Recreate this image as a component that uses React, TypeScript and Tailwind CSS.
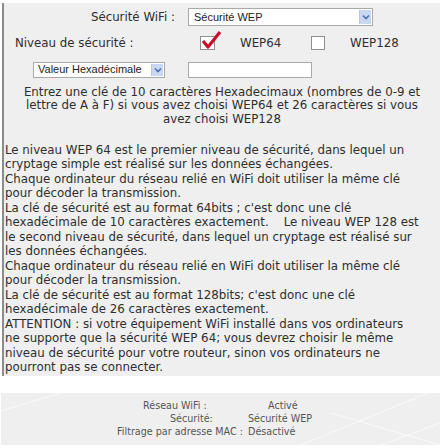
import React from "react";

const Arrow = () => (
  <div className="flex h-full w-[12px] items-center justify-center bg-[#c9d8f0] border-l border-[#b4c6e4]">
    <svg width="8" height="6" viewBox="0 0 8 6">
      <path d="M1 1.5 L4 4.5 L7 1.5" fill="none" stroke="#4a6fb5" strokeWidth="1.6" />
    </svg>
  </div>
);

export default function App() {
  const txt = { fontFamily: '"DejaVu Sans", Verdana, sans-serif' };
  const sel = { fontFamily: '"Liberation Sans", Arial, sans-serif' };
  return (
    <div className="w-[442px] h-[448px] bg-white overflow-hidden text-[#2e2e2e]" style={txt}>
      <div className="mt-[3px] ml-[2px] w-[438px] h-[373px] bg-[#efefef] border-l-2 border-[#8c8c8c] text-[11.8px] leading-[14.5px]">
        {/* Row 1 */}
        <div className="flex items-center pt-[5px]">
          <div className="w-[171px] text-right">Sécurité WiFi :</div>
          <div className="ml-[13px] flex h-[18px] w-[185px] items-center justify-between border border-[#a9a9a9] bg-white pl-[5px] pr-[1px] py-[1px] text-[11px] text-[#222]" style={sel}>
            <span>Sécurité WEP</span>
            <Arrow />
          </div>
        </div>
        {/* Row 2 */}
        <div className="flex items-center pt-[10px] pl-[11px]">
          <div className="w-[185px]">Niveau de sécurité :</div>
          <div className="relative h-[14px] w-[15px] border border-[#8f8f8f] bg-white">
            <svg className="absolute -top-[7px] left-[1px]" width="20" height="20" viewBox="0 0 20 20">
              <path d="M1 11 L6 17 L18 2" fill="none" stroke="#c8102a" strokeWidth="3.2" strokeLinejoin="round" />
            </svg>
          </div>
          <div className="ml-[25px] w-[46px]">WEP64</div>
          <div className="ml-[25px] h-[14px] w-[14px] border border-[#8f8f8f] bg-white"></div>
          <div className="ml-[25px]">WEP128</div>
        </div>
        {/* Row 3 */}
        <div className="flex items-center pt-[11px]">
          <div className="ml-[29px] flex h-[16px] w-[132px] items-center justify-between border border-[#a9a9a9] bg-white pl-[4px] pr-[1px] py-[1px] text-[11px] text-[#222]" style={sel}>
            <span>Valeur Hexadécimale</span>
            <Arrow />
          </div>
          <div className="ml-[23px] h-[16px] w-[124px] border border-[#a9a9a9] bg-white"></div>
        </div>
        {/* Row 4 */}
        <div className="mt-[8px] px-[10px] text-center leading-[13.8px]">
          Entrez une clé de 10 caractères Hexadecimaux (nombres de 0-9 et lettre de A à F) si vous avez choisi WEP64 et 26 caractères si vous avez choisi WEP128
        </div>
        {/* Paragraph */}
        <div className="mt-[16px] ml-[1px] w-[415px]">
          <div>Le niveau WEP 64 est le premier niveau de sécurité, dans lequel un cryptage simple est réalisé sur les données échangées.</div>
          <div>Chaque ordinateur du réseau relié en WiFi doit utiliser la même clé pour décoder la transmission.</div>
          <div>La clé de sécurité est au format 64bits ; c'est donc une clé hexadécimale de 10 caractères exactement.&nbsp;&nbsp;&nbsp; Le niveau WEP 128 est le second niveau de sécurité, dans lequel un cryptage est réalisé sur les données échangées.</div>
          <div>Chaque ordinateur du réseau relié en WiFi doit utiliser la même clé pour décoder la transmission.</div>
          <div>La clé de sécurité est au format 128bits; c'est donc une clé hexadécimale de 26 caractères exactement.</div>
          <div>ATTENTION : si votre équipement WiFi installé dans vos ordinateurs ne supporte que la sécurité WEP 64; vous devrez choisir le même niveau de sécurité pour votre routeur, sinon vos ordinateurs ne pourront pas se connecter.</div>
        </div>
      </div>
      {/* Footer */}
      <div className="relative mt-[17px] ml-[1px] h-[52px] w-[439px] overflow-hidden bg-[#efefef] text-[9.6px] leading-[13px] text-[#555]">
        <svg className="absolute inset-0" width="439" height="52" viewBox="0 0 439 52">
          <path d="M0 18 L60 0" stroke="#f8f8f8" strokeWidth="1.2" fill="none" />
          <path d="M300 52 L439 -5" stroke="#f8f8f8" strokeWidth="1.2" fill="none" />
          <path d="M330 20 L439 52" stroke="#f8f8f8" strokeWidth="1.2" fill="none" />
          <path d="M380 52 L439 30" stroke="#f8f8f8" strokeWidth="1.2" fill="none" />
        </svg>
        <div className="relative grid grid-cols-[131px_90px] pl-[116px] pt-[6px] whitespace-nowrap">
          <div className="pl-[26px]">Réseau WiFi :</div>
          <div className="pl-[20px]">Activé</div>
          <div className="pl-[53px]">Sécurité:</div>
          <div>Sécurité WEP</div>
          <div>Filtrage par adresse MAC :</div>
          <div>Désactivé</div>
        </div>
      </div>
    </div>
  );
}
